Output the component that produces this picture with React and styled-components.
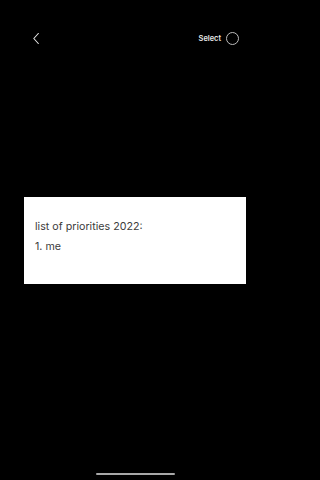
import React from "react";
import styled, { createGlobalStyle } from "styled-components";

const Global = createGlobalStyle`
  html, body { margin: 0; padding: 0; background: #000; }
  body { width: 270px; height: 480px; overflow: hidden; }
  #root { height: 480px; }
`;

const Screen = styled.div`
  width: 270px;
  height: 480px;
  background: #000;
  display: flex;
  flex-direction: column;
  font-family: Inter, "Liberation Sans", sans-serif;
`;

const Header = styled.header`
  height: 76px;
  box-sizing: border-box;
  padding: 0 31px 0 31px;
  display: flex;
  align-items: center;
  justify-content: space-between;
`;

const BackButton = styled.button`
  background: none;
  border: 0;
  padding: 0;
  width: 10px;
  height: 14px;
  display: flex;
  align-items: center;
  justify-content: center;
  color: #e6e6e6;
`;

const SelectGroup = styled.div`
  display: flex;
  align-items: center;
  gap: 5px;
`;

const SelectLabel = styled.span`
  color: #e8e8e8;
  font-size: 7.4px;
  font-weight: 600;
`;

const RadioCircle = styled.span`
  width: 11px;
  height: 11px;
  border: 1px solid #bdbdbd;
  border-radius: 50%;
`;

const Main = styled.main`
  flex: 1;
  display: flex;
  align-items: center;
  justify-content: center;
`;

const Card = styled.div`
  width: 222px;
  height: 87px;
  box-sizing: border-box;
  background: #fff;
  padding: 20px 11px 0;
  color: #3c3c3c;
  font-size: 10.7px;
  line-height: 20px;
`;

const Line = styled.div``;

const Footer = styled.footer`
  height: 76px;
  box-sizing: border-box;
  display: flex;
  align-items: flex-end;
  justify-content: center;
  padding-bottom: 5px;
`;

const HomeIndicator = styled.div`
  width: 79px;
  height: 2.5px;
  border-radius: 2px;
  background: #a8a8a8;
`;

export default function App() {
  return (
    <>
      <Global />
      <Screen>
        <Header>
          <BackButton aria-label="Back">
            <svg width="6" height="11" viewBox="0 0 6 11" fill="none">
              <path d="M5.3 0.5 L0.8 5.5 L5.3 10.5" stroke="currentColor" strokeWidth="1.1" strokeLinecap="round" strokeLinejoin="round" />
            </svg>
          </BackButton>
          <SelectGroup>
            <SelectLabel>Select</SelectLabel>
            <RadioCircle />
          </SelectGroup>
        </Header>
        <Main>
          <Card>
            <Line>list of priorities 2022:</Line>
            <Line>1. me</Line>
          </Card>
        </Main>
        <Footer>
          <HomeIndicator />
        </Footer>
      </Screen>
    </>
  );
}
